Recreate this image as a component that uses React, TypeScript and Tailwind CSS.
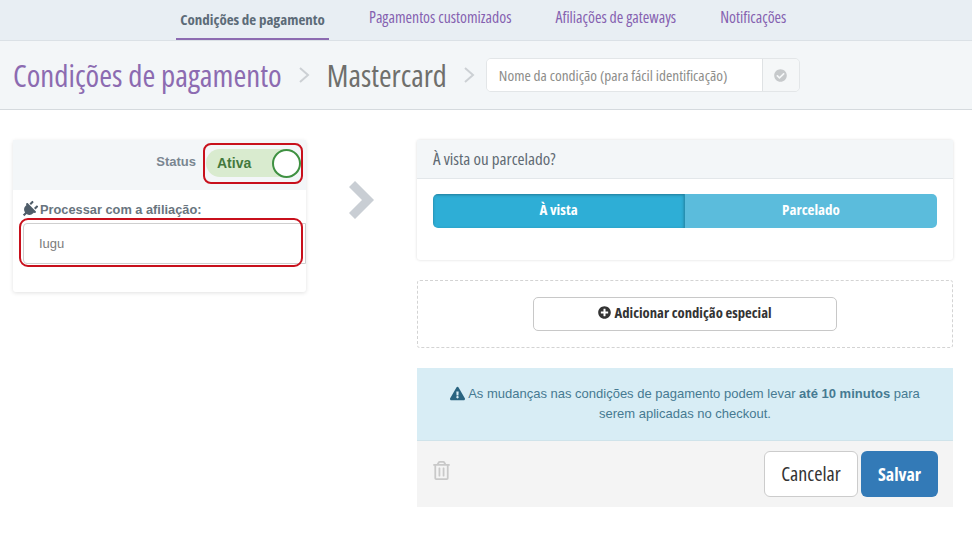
import React from 'react';
import { FaCheckCircle, FaExclamationTriangle, FaPlug, FaPlusCircle, FaRegTrashAlt } from 'react-icons/fa';

const narrow = "font-['Open_Sans','Noto_Sans',sans-serif] font-stretch-[75%]";
const body = "font-['Liberation_Sans',Arial,sans-serif] font-stretch-normal";

const tabs = ['Pagamentos customizados', 'Afiliações de gateways', 'Notificações'];

const Crumb = () => (
  <svg width="14" height="18" viewBox="0 0 14 18" fill="none" stroke="#ccd0d4" strokeWidth="2">
    <path d="M3 2l8 7-8 7" />
  </svg>
);

export default function App() {
  return (
    <div className={`w-[972px] h-[535px] overflow-hidden bg-white ${narrow}`}>
      <nav className="h-[41px] bg-[#e8eef3] border-b border-[#dbe1e6] flex pl-[176px] whitespace-nowrap">
        <div className="h-10 w-[153px] border-b-2 border-[#8c6bb1] flex items-center justify-center text-[15px] font-bold text-[#5c6b78]">
          Condições de pagamento
        </div>
        <div className="flex items-center gap-[44px] ml-[40px] h-[35px] text-[15.75px] text-[#8561b0]">
          {tabs.map(t => (
            <span key={t}>{t}</span>
          ))}
        </div>
      </nav>

      <header className="h-[69px] bg-[#f3f6f8] border-b border-[#d5dade] flex items-center pl-[13px] whitespace-nowrap">
        <h1 className="text-[31px] text-[#8c6bb1] leading-none">Condições de pagamento</h1>
        <div className="ml-[15px] mr-[16px]"><Crumb /></div>
        <span className="text-[30.5px] text-[#6f6f6c] leading-none">Mastercard</span>
        <div className="ml-[15px] mr-[10px]"><Crumb /></div>
        <div className="flex h-[34px] w-[314px] rounded-[5px] border border-[#e3e6e8] overflow-hidden">
          <div className="flex-1 bg-white flex items-center pl-[12px] text-[15.3px] text-[#8d8d8a]">
            Nome da condição (para fácil identificação)
          </div>
          <div className="w-[37px] border-l border-[#dfe2e4] bg-[#f5f7f8] flex items-center justify-center">
            <FaCheckCircle size={13} color="#c6c9cb" />
          </div>
        </div>
      </header>

      <main className="flex pl-[13px] pt-[30px]">
        <section className={`w-[293px] h-[152px] rounded-[3px] shadow-[0_1px_4px_rgba(0,0,0,0.12)] self-start ${body}`}>
          <div className="h-[50px] bg-[#f3f6f8] flex items-center justify-end pr-[3px]">
            <span className="text-[13px] font-bold text-[#7a8691] mr-[7px] -mt-[6px]">Status</span>
            <div className="relative w-[100px] h-[41px] border-2 border-[#c8101c] rounded-[8px] flex items-center -mt-[4px]">
              <div className="ml-[1px] w-[94px] h-[28px] rounded-full bg-[#d9ebcf] flex items-center pl-[11px] text-[14px] font-bold text-[#44793d]">
                Ativa
              </div>
              <span className="absolute right-[0px] top-[4px] w-[29px] h-[29px] rounded-full bg-white border-2 border-[#3f9142]" />
            </div>
          </div>
          <div className="pl-[10px] pt-[10px]">
            <div className="flex items-center gap-[2px] -ml-[1px] text-[12.8px] font-bold text-[#68747e]">
              <FaPlug size={17} className="rotate-45 -ml-[1px]" color="#4f5d69" />
              Processar com a afiliação:
            </div>
            <div className="relative mt-[4px] h-[41px] border border-[#cfcfcf] rounded-l-[4px] bg-white flex items-center pl-[15px] text-[13px] text-[#7c7c7c]">
              Iugu
              <span className="absolute -left-[5px] right-[2px] -top-[6px] -bottom-[4px] border-2 border-[#c8101c] rounded-[9px]" />
            </div>
          </div>
        </section>

        <div className="w-[111px] pt-[41px] pl-[43px]">
          <svg width="26" height="38" viewBox="0 0 26 38" fill="none" stroke="#c9ced4" strokeWidth="8.5">
            <path d="M3 3l16 16-16 16" />
          </svg>
        </div>

        <div className="w-[536px] flex flex-col">
          <section className="h-[120px] rounded-[3px] shadow-[0_0_3px_rgba(0,0,0,0.15)]">
            <div className="h-[39px] bg-[#f3f6f8] border-b border-[#e3e7ea] flex items-center pl-[16px] text-[17px] text-[#5f6a73]">
              À vista ou parcelado?
            </div>
            <div className="flex mx-[16px] mt-[15px] h-[34px] rounded-[5px] overflow-hidden text-[15px] font-bold text-white">
              <div className="w-1/2 pb-[3px] bg-[#2eaed6] border-r border-[#2790b2] shadow-[inset_0_1px_3px_rgba(0,0,0,0.3)] flex items-center justify-center">À vista</div>
              <div className="w-1/2 pb-[3px] bg-[#5bbcdc] flex items-center justify-center">Parcelado</div>
            </div>
          </section>

          <section className="mt-[20px] h-[68px] border border-dashed border-[#d3d3d3] rounded-[3px] flex justify-center pt-[16px]">
            <button className="w-[304px] h-[34px] pb-[4px] bg-white border border-[#c8c8c8] rounded-[5px] flex items-center justify-center gap-[3px] text-[14.7px] font-bold text-[#333]">
              <FaPlusCircle size={13} color="#333" />
              Adicionar condição especial
            </button>
          </section>

          <section className={`mt-[20px] h-[73px] bg-[#d8edf5] border-b border-[#cfe3ea] px-[30px] pt-[16px] text-center text-[13px] leading-[20px] text-[#467a92] ${body}`}>
            <FaExclamationTriangle size={15} className="inline -mt-[3px]" color="#2a6480" />
            {' '}As mudanças nas condições de pagamento podem levar <b>até 10 minutos</b> para serem aplicadas no checkout.
          </section>

          <section className="h-[66px] bg-[#f4f4f4] flex items-center pl-[15px] pr-[15px]">
            <FaRegTrashAlt size={19} color="#c9c9c9" className="-mt-[8px]" />
            <button className="ml-auto w-[94px] h-[46px] bg-white border border-[#cccccc] rounded-[6px] text-[20px] font-medium text-[#333]">
              Cancelar
            </button>
            <button className="ml-[3px] w-[77px] h-[46px] bg-[#337ab7] rounded-[6px] text-[18px] font-bold text-white">
              Salvar
            </button>
          </section>
        </div>
      </main>
    </div>
  );
}
